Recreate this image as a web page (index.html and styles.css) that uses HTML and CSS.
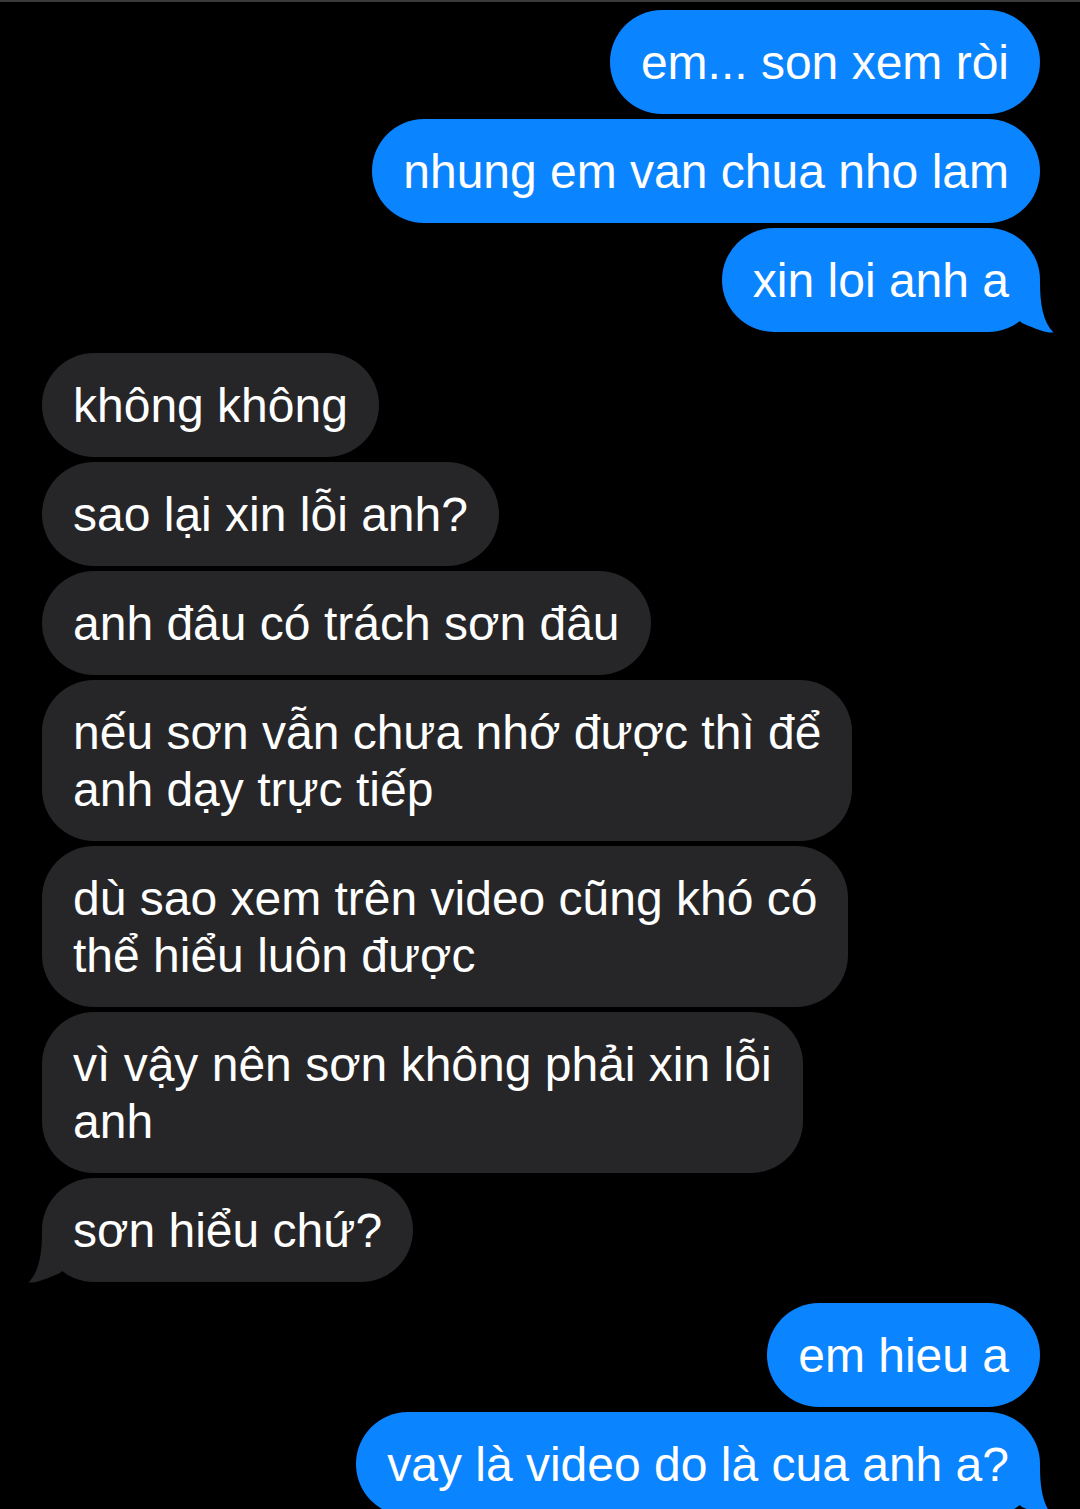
FILE: index.html
```html
<!DOCTYPE html>
<html lang="vi">
<head>
<meta charset="utf-8">
<title>Messages</title>
<link rel="stylesheet" href="styles.css">
</head>
<body>
<div class="screen">
  <div class="chat">
    <div class="group sent">
      <div class="bubble">em... son xem ròi</div>
      <div class="bubble">nhung em van chua nho lam</div>
      <div class="bubble tailed">xin loi anh a<svg class="tail" viewBox="0 0 45 51" width="45" height="51"><path d="M30 0 C30 22 33 40 43.5 50.5 C36 51 27 47.5 12 41 L0 30 L0 0 Z"/></svg></div>
    </div>
    <div class="group received">
      <div class="bubble">không không</div>
      <div class="bubble">sao lại xin lỗi anh?</div>
      <div class="bubble">anh đâu có trách sơn đâu</div>
      <div class="bubble">nếu sơn vẫn chưa nhớ được thì để<br>anh dạy trực tiếp</div>
      <div class="bubble">dù sao xem trên video cũng khó có<br>thể hiểu luôn được</div>
      <div class="bubble">vì vậy nên sơn không phải xin lỗi<br>anh</div>
      <div class="bubble tailed">sơn hiểu chứ?<svg class="tail" viewBox="0 0 45 51" width="45" height="51"><path d="M30 0 C30 22 33 40 43.5 50.5 C36 51 27 47.5 12 41 L0 30 L0 0 Z"/></svg></div>
    </div>
    <div class="group sent">
      <div class="bubble">em hieu a</div>
      <div class="bubble tailed">vay là video do là cua anh a?<svg class="tail" viewBox="0 0 45 51" width="45" height="51"><path d="M30 0 C30 22 33 40 43.5 50.5 C36 51 27 47.5 12 41 L0 30 L0 0 Z"/></svg></div>
    </div>
  </div>
</div>
</body>
</html>
```

FILE: styles.css
```css
html, body {
  margin: 0;
  padding: 0;
  background: #000;
}

.screen {
  width: 1080px;
  height: 1509px;
  overflow: hidden;
  border-top: 2px solid #3a3a3c;
  box-sizing: border-box;
  font-family: "Liberation Sans", Arial, sans-serif;
  font-size: 48px;
  line-height: 57px;
  color: #fff;
}

.chat {
  display: flex;
  flex-direction: column;
  gap: 21px;
  padding: 8px 40px 0 42px;
}

.group {
  display: flex;
  flex-direction: column;
  gap: 5px;
}

.group.sent {
  align-items: flex-end;
}

.group.received {
  align-items: flex-start;
}

.bubble {
  position: relative;
  padding: 23.5px 31px;
  border-radius: 52px;
  white-space: nowrap;
}

.sent .bubble {
  background: #0a84ff;
}

.received .bubble {
  background: #262628;
}

.tail {
  position: absolute;
  bottom: -1px;
  display: block;
}

.sent .tail {
  right: -15px;
  fill: #0a84ff;
}

.received .tail {
  left: -15px;
  fill: #262628;
  transform: scaleX(-1);
}
```
